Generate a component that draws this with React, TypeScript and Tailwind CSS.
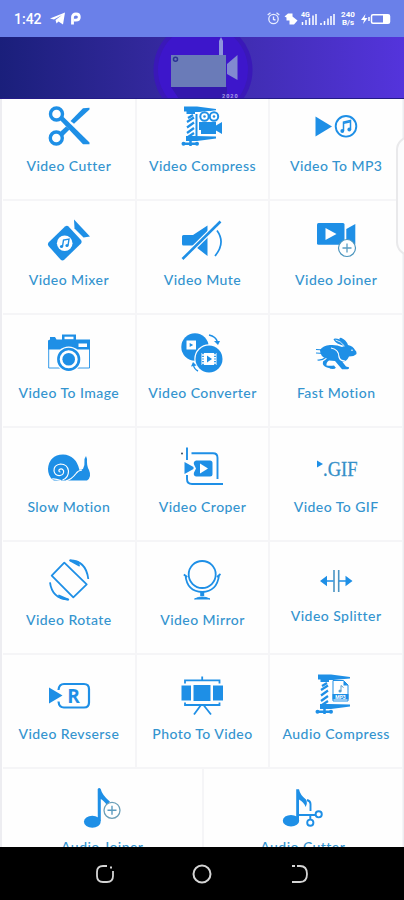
import { ReactNode } from "react"
import clsx from "clsx"

const BLUE = "#1e8fe6"

const clamp = (
  <>
    <path d="M3 1.500h13l19 2.500v1.600L18 7H14v2H5.500V6.500H3z" fill={BLUE} />
    <path d="M6 17l7-4.500M6 22.500l7-5M6 28l7-5M7 32l6-4M7 13l5-3" stroke={BLUE} strokeWidth="2.200" fill="none" />
    <path d="M5 31h9l21 .5v2L16 36H5z" fill={BLUE} />
    <path d="M9.500 35v6M2 38.800h15" stroke={BLUE} strokeWidth="2.500" fill="none" />
    <circle cx="2.500" cy="38.800" r="2" fill={BLUE} />
    <circle cx="16" cy="38.800" r="2" fill={BLUE} />
  </>
)

const icons: Record<string, ReactNode> = {
  cutter: (
    <>
      <g fill="none" stroke={BLUE} strokeWidth="3.400">
        <circle cx="8.500" cy="9" r="6" />
        <circle cx="8.300" cy="33" r="6" />
      </g>
      <path d="M14.500 11L41.500 37.500V39.200H35L12 15z" fill={BLUE} />
      <path d="M22.500 16L35 3.200L41.500 2.800V4.500L26 18.800z" fill={BLUE} />
      <path d="M12 27L18 21.500L21.500 24.500L15 31z" fill={BLUE} />
    </>
  ),
  compress: (
    <>
      {clamp}
      <path d="M14 7.500L35 5.500V31H14z" fill="#fff" />
      <g fill="none" stroke={BLUE} strokeWidth="2">
        <circle cx="23.500" cy="11.500" r="4.200" />
        <circle cx="33" cy="11.500" r="4.200" />
        <path d="M15.500 9v22" />
      </g>
      <circle cx="23.500" cy="11.500" r="1.300" fill={BLUE} />
      <circle cx="33" cy="11.500" r="1.300" fill={BLUE} />
      <path d="M18 17h17v3.500l6-3.500v12l-6-3.500V29H20v-4h-2z" fill={BLUE} />
    </>
  ),
  mp3: (
    <>
      <path d="M.5 11.500L17 21.500L.5 31.500z" fill={BLUE} />
      <circle cx="31" cy="21.300" r="10.300" fill="none" stroke={BLUE} strokeWidth="1.900" />
      <path d="M28.500 26v-9l7-1.500v9" fill="none" stroke={BLUE} strokeWidth="1.500" />
      <path d="M28.500 18.300l7-1.500" stroke={BLUE} strokeWidth="1.500" />
      <circle cx="27.300" cy="26" r="1.900" fill={BLUE} />
      <circle cx="34.300" cy="24.500" r="1.900" fill={BLUE} />
    </>
  ),
  mixer: (
    <>
      <path d="M17 7.500q2-1.500 3.500 0L33 21q1.300 1.800 0 3.500L16 41q-1.800 1-3.500-.5L.5 27q-1.200-1.700 0-3.500z" fill={BLUE} />
      <circle cx="16.700" cy="24.300" r="7.800" fill="#fff" />
      <path d="M26 .5L42 17.500L35.500 18.500L26.500 9.500z" fill={BLUE} />
      <path d="M14.500 27.500l1-6.500 5.500-1-1 6.500" fill="none" stroke={BLUE} strokeWidth="1.400" />
      <circle cx="13.500" cy="27.500" r="1.600" fill={BLUE} />
      <circle cx="19" cy="26.500" r="1.600" fill={BLUE} />
    </>
  ),
  mute: (
    <>
      <path d="M2.500 16H12L26.500 6.500V37L13 26.500H2.500q-1.500 0-1.500-1.500v-7.500q0-1.500 1.500-1.500z" fill={BLUE} />
      <path d="M1.500 40L39.500 2.500" stroke="#fff" strokeWidth="5" />
      <path d="M1.500 40L39.500 2.500" stroke={BLUE} strokeWidth="2.600" />
      <path d="M36 11.500q9 12.500-2 25.500" fill="none" stroke={BLUE} strokeWidth="1.700" />
    </>
  ),
  joiner: (
    <>
      <rect x="2" y="4" width="27.500" height="21.700" rx="1.500" fill={BLUE} />
      <path d="M31.300 10L40.300 5V25H31.300z" fill={BLUE} />
      <path d="M10.500 9L21.500 15L10.500 21z" fill="#fff" />
      <circle cx="32" cy="29" r="8.500" fill="#fff" stroke="#4a94bd" strokeWidth="1.200" />
      <path d="M27.500 29h9M32 24.500v9" stroke="#5a9dc2" strokeWidth="1.300" />
    </>
  ),
  image: (
    <>
      <path d="M.7 12V36H41.500V12" fill="none" stroke={BLUE} strokeWidth=".9" />
      <path d="M0 8.500L2 7.500V5h5l1.500 2.500H14V2.500H28V7.500H42V17.500H0z" fill={BLUE} />
      <path d="M16.500 4.700h9v2.500h-9z" fill="#fff" />
      <path d="M30.500 11.500h8.500v3.500h-8.500z" fill="#fff" />
      <circle cx="20.700" cy="27.300" r="12.800" fill="#fff" />
      <circle cx="20.700" cy="27.300" r="10.300" fill="#fff" stroke={BLUE} strokeWidth="2.600" />
      <circle cx="20.700" cy="27.300" r="6.300" fill={BLUE} />
    </>
  ),
  converter: (
    <>
      <circle cx="14" cy="15" r="13.700" fill={BLUE} />
      <path d="M5.500 8.500h9.500v9H5.500z" fill="#fff" />
      <path d="M8.700 11l3.500 2-3.500 2z" fill={BLUE} />
      <circle cx="28" cy="27" r="14.700" fill="#fff" />
      <circle cx="28" cy="27" r="13.500" fill={BLUE} />
      <path d="M20.500 21h15v12h-15z" fill="#fff" />
      <path d="M22 21v12M34 21v12" stroke={BLUE} strokeWidth="1.700" strokeDasharray="1.200 1.500" />
      <path d="M26 23.500l5 3.500-5 3.500z" fill={BLUE} />
      <path d="M28 3q7 1.500 8.500 7" fill="none" stroke={BLUE} strokeWidth="1.400" />
      <path d="M33 9h6l-2 4z" fill={BLUE} />
      <path d="M17 39q-4-2-4.500-6" fill="none" stroke={BLUE} strokeWidth="1.400" />
      <path d="M10 34.500l2-4.500 3.500 3.500z" fill={BLUE} />
    </>
  ),
  fast: (
    <>
      <path d="M5 18Q8 13.500 15 13Q22 12.500 27 15L29.500 14Q21 12 18.500 7.500Q19 5.500 25 7.500Q23.500 5.500 26 5.700Q31 7.500 33 13Q38 14 40 18Q42 19.500 41.500 22Q39 24.500 34 24.500Q32 29 27.500 30L31 34.500L34 35.300Q34.500 37.300 32.500 37.300H27L20 29L14 28.500Q11 30.500 11.500 33.500Q15 34 19 33.500L21 36Q17 37 12 35.500Q7 34 8 29.500L12 26.500Q5 25 5 18z" fill={BLUE} />
      <path d="M1 17.500l9 .5M1 21l8 .5M2.500 28q5 .5 8-2.500M15 36q3 .8 5 0" stroke={BLUE} strokeWidth="1.200" fill="none" />
      <path d="M16 16q8 1.500 8 9 1 4 6 4" stroke="#fff" strokeWidth="1.200" fill="none" />
      <path d="M20.500 8q5 1 9 6" stroke="#fff" strokeWidth=".8" fill="none" />
      <circle cx="37" cy="18.300" r=".8" fill="#fff" />
    </>
  ),
  slow: (
    <>
      <path d="M5 34Q0 30 0 23Q1 9 15 8.500Q28 9 31.500 24L35 23Q37 19 36.500 13L38 10L39 13Q38.500 20 41 24Q44 31 39 34.500H6z" fill={BLUE} />
      <path d="M4 33q3-.5 9 1.500M14.500 34q6-2 6-9-1-7-8-7-7 1-6.500 7 1 5 6 4.500 4.500-1 3.500-5-2-3-4.500-.5-.5 2 1.500 2M18 35q6-2 10-7.500 2-3 6-3.500" stroke="#fff" strokeWidth="1.200" fill="none" />
    </>
  ),
  croper: (
    <>
      <g fill="none" stroke={BLUE} strokeWidth="1.900">
        <path d="M6 1.500V14M6 29v4q0 5 5 5H42M10.500 7.300H32q4.500 0 4.500 4.500V33" />
      </g>
      <circle cx="1" cy="7.500" r="1" fill="#3b4b5c" />
      <path d="M3.500 16L12.500 21L12.500 23L3.500 28z" fill={BLUE} />
      <path d="M15 14.500H29q2.500 0 2.500 2.500V28q0 2.500-2.500 2.500H15q-3-1-2-4l2-4-2-4q-1-3 2-4z" fill={BLUE} />
      <path d="M19 17.500L27 22.500L19 27.500z" fill="#fff" />
    </>
  ),
  gif: (
    <>
      <path d="M2 14.500L8 18L2 21.500z" fill={BLUE} />
      <text x="8" y="29.500" fontFamily="Liberation Serif, serif" fontSize="22" fill="#348fc8" stroke="#348fc8" strokeWidth=".3" textLength="34.500" lengthAdjust="spacingAndGlyphs">
        .GIF
      </text>
    </>
  ),
  rotate: (
    <g fill="none" stroke={BLUE} strokeWidth="1.800" strokeLinejoin="round">
      <path d="M16.300 3.700L38.700 25.300L25.300 38.300L3.700 16.700z" />
      <path d="M22 1.500Q38 1.500 40.300 20M2 23.300Q4 39.500 20.300 40.500" />
      <path d="M22 1.500L31 6.500L30 3zM20.300 40.500L11 36.500L13 39z" fill={BLUE} />
    </g>
  ),
  mirror: (
    <g fill="none" stroke={BLUE} strokeWidth="1.800">
      <circle cx="21.200" cy="15.500" r="13.500" />
      <path d="M4.500 16.500Q6 32.500 21.200 33Q36 32.500 38 16.500M2.800 15.500l3.500 2.500M39.500 15l-3.500 3" />
      <path d="M21.200 33v4" strokeWidth="4" />
      <path d="M13.500 40Q21 36 29 40z" fill={BLUE} strokeWidth="1" />
    </g>
  ),
  splitter: (
    <>
      <path d="M19 11V33M23.700 11V33" stroke="#4a94c4" strokeWidth="1.600" />
      <path d="M10 22H18.500M24 22H32" stroke={BLUE} strokeWidth="1.300" />
      <path d="M5 22L12 16.800V27.200zM37.500 22L30.500 16.800V27.200z" fill={BLUE} />
    </>
  ),
  reverse: (
    <>
      <path d="M1 14.500L14.500 22.500L1 30.500z" fill={BLUE} />
      <path d="M10.500 17Q11 11 16 11H36Q41 11 41 16V29.500Q41 34.500 36 34.500H16Q11 34.500 10.500 28.500" fill="none" stroke={BLUE} strokeWidth="2.200" />
      <text x="25.500" y="29.500" textAnchor="middle" fontFamily="Open Sans, sans-serif" fontWeight="700" fontSize="19" fill={BLUE}>
        R
      </text>
    </>
  ),
  photo: (
    <>
      <path d="M.5 12.500h9.500v15H.5zM12.500 12h17v16h-17zM32 12.500h10v15h-10z" fill={BLUE} />
      <path d="M4 10.500V7.300H38.500V10.500M4 29.500V32H38.500V29.500M21.200 7V3.500M20 32L13 41.500M22.500 32L30 41.500" fill="none" stroke={BLUE} strokeWidth="1.800" />
    </>
  ),
  audioCompress: (
    <>
      {clamp}
      <path d="M18 7.500H28.500L33 12V28H18z" fill="#fff" stroke={BLUE} strokeWidth="1" />
      <path d="M28.500 7.500V12.500H33z" fill={BLUE} />
      <path d="M26 18.500V12.500l2.500 2" stroke="#5c9fcb" strokeWidth="1" fill="none" />
      <circle cx="25" cy="18" r="1.500" fill="#5c9fcb" />
      <path d="M17.500 21h16v5.500h-16z" fill={BLUE} />
      <text x="25.500" y="25.500" textAnchor="middle" fontFamily="Roboto, sans-serif" fontWeight="700" fontSize="5" fill="#fff">
        MP3
      </text>
    </>
  ),
  audioJoiner: (
    <>
      <path d="M16.700 3q1.500-2 3 0Q21 9 29 15.700L26 19Q22 14 19.800 13V35h-3z" fill={BLUE} />
      <ellipse cx="11.300" cy="35.700" rx="8.400" ry="6" fill={BLUE} />
      <circle cx="31" cy="24.300" r="8" fill="#fff" stroke="#6b9fb8" strokeWidth="1.300" />
      <path d="M26.500 24.300h9M31 19.800v9" stroke="#5c9cc0" strokeWidth="1.400" />
    </>
  ),
  audioCutter: (
    <>
      <path d="M14.200 3.300h2.800Q18 9 24 13.500Q26 17 23.500 21Q22 16 17 13.500V34h-2.800z" fill={BLUE} />
      <ellipse cx="9" cy="34.700" rx="8.200" ry="5.800" fill={BLUE} />
      <g fill="none" stroke={BLUE} strokeWidth="1.900">
        <path d="M16 29H33.500M28.300 29v4.500M25 14q3.500 1 3.500 4v7" />
        <circle cx="36.700" cy="28.300" r="3.100" />
        <circle cx="28.300" cy="36.700" r="3.100" />
      </g>
    </>
  ),
}

interface Tool {
  icon: string
  title: string
  tight?: boolean
}

const tools: Tool[] = [
  { icon: "cutter", title: "Video Cutter" },
  { icon: "compress", title: "Video Compress" },
  { icon: "mp3", title: "Video To MP3" },
  { icon: "mixer", title: "Video Mixer" },
  { icon: "mute", title: "Video Mute" },
  { icon: "joiner", title: "Video Joiner" },
  { icon: "image", title: "Video To Image" },
  { icon: "converter", title: "Video Converter" },
  { icon: "fast", title: "Fast Motion" },
  { icon: "slow", title: "Slow Motion" },
  { icon: "croper", title: "Video Croper" },
  { icon: "gif", title: "Video To GIF" },
  { icon: "rotate", title: "Video Rotate" },
  { icon: "mirror", title: "Video Mirror" },
  { icon: "splitter", title: "Video Splitter", tight: true },
  { icon: "reverse", title: "Video Revserse" },
  { icon: "photo", title: "Photo To Video" },
  { icon: "audioCompress", title: "Audio Compress" },
]

const audioTools: Tool[] = [
  { icon: "audioJoiner", title: "Audio Joiner" },
  { icon: "audioCutter", title: "Audio Cutter" },
]

function ToolCell({ tool }: { tool: Tool }) {
  return (
    <div className="flex h-[113.5px] flex-col items-center border-r-2 border-b-2 border-[#f5f5f7] pt-[17.5px]">
      <svg viewBox="0 0 42 42" className="h-[42px] w-[42px] shrink-0 overflow-visible">
        {icons[tool.icon]}
      </svg>
      <span
        className={clsx(
          "font-[Lato,sans-serif] text-[14px] leading-5 font-medium tracking-[0.45px] whitespace-nowrap text-[#3494cf]",
          tool.tight ? "mt-[5px]" : "mt-[9px]",
        )}
      >
        {tool.title}
      </span>
    </div>
  )
}

function StatusBar() {
  return (
    <div className="flex h-[37px] shrink-0 items-center bg-[#6a80e9] pr-[13px] pl-[14px] text-white">
      <span className="w-[36px] font-[Roboto,sans-serif] text-[14px] leading-none font-medium">1:42</span>
      {/* Telegram */}
      <svg viewBox="0 0 15 13" className="h-[13px] w-[15px]">
        <path d="M0 6.500L15 .5L13 12.500L8.500 9.500L6.500 11.500L5.500 8L12 3L4 7.500z" fill="#fff" />
      </svg>
      <svg viewBox="0 0 12 13" className="ml-[5px] h-[13px] w-[12px]">
        <path
          d="M2.500 12.500V5Q2.500 2 6 2Q9.300 2 9.300 5Q9.300 8.200 6 8.200H4"
          fill="none"
          stroke="#fff"
          strokeWidth="2.800"
        />
      </svg>
      <div className="ml-auto flex items-center">
        {/* Alarm */}
        <svg viewBox="0 0 13 13" className="h-[13px] w-[13px]" fill="none" stroke="#e8edff" strokeWidth="1.300">
          <circle cx="6.500" cy="7" r="4.700" />
          <path d="M6.500 4.500V7.500L8.500 8M.7 3L3.500 .8M12.300 3L9.500 .8" />
        </svg>
        {/* Vibrate */}
        <svg viewBox="0 0 14 12" className="ml-[4px] h-[12px] w-[14px]">
          <path d="M.5 3.500L4 .5H8.500V3.500L13.500 7.500L10 11.500H5.500V7.500H2.500V4.500z" fill="#fff" />
        </svg>
        <svg viewBox="0 0 34 15" className="ml-[3px] h-[15px] w-[34px]">
          <text x="0" y="6" fontFamily="Roboto, sans-serif" fontWeight="700" fontSize="7" fill="#fff">
            4G
          </text>
          <path
            d="M1.500 14v-3M5 14V9M8.500 14V7M12 14V4.500M15 14V3M20 14v-2M23.500 14v-4M27 14V7.500M30 14V5M33 14V3"
            stroke="#fff"
            strokeWidth="1.500"
          />
        </svg>
        <div className="ml-[5px] w-[16px] text-center font-[Roboto,sans-serif] text-[8px] leading-[8px] font-bold">
          240
          <br />
          B/s
        </div>
        <svg viewBox="0 0 30 12" className="ml-[5px] h-[12px] w-[30px]">
          <path d="M4.500 1L0 7h3l-1 4 4.500-6H3.500z" fill="#fff" />
          <path d="M8 4v4" stroke="#fff" strokeWidth="1.500" />
          <rect x="10.500" y="1.700" width="18" height="8.600" rx="1.500" fill="none" stroke="#fff" strokeWidth="1.500" />
          <path d="M22 2h6v8h-6z" fill="#fff" />
        </svg>
      </div>
    </div>
  )
}

function Banner() {
  return (
    <div className="flex h-[62px] shrink-0 justify-center overflow-hidden border-b border-[#241b86] bg-gradient-to-r from-[#1a1f7b] via-[#3b2ba8] to-[#5434dc]">
      <svg viewBox="0 0 102 62" className="ml-[4px] h-[62px] w-[102px]">
        <circle cx="50" cy="33" r="49.500" fill="#3a18b8" />
        <circle cx="50" cy="33" r="45" fill="#3d16cb" />
        <path d="M18 50H74V62H26z" fill="#3318ad" />
        <rect x="18" y="18" width="55" height="32" fill="#6a7bb8" />
        <circle cx="22.500" cy="22.300" r="2" fill="none" stroke="#2b3294" strokeWidth="1.500" />
        <path d="M66 18V4l2-4 2 4V18z" fill="#8e95dc" />
        <path d="M74 27L84.500 18V43L74 37z" fill="#8189d0" />
        <text x="69" y="61" fontFamily="Roboto, sans-serif" fontWeight="700" fontSize="5.500" letterSpacing="1" fill="#a9a0e6">
          2020
        </text>
      </svg>
    </div>
  )
}

function NavBar() {
  return (
    <div className="flex h-[53px] shrink-0 items-center justify-center gap-[77.5px] bg-black">
      <svg viewBox="0 0 20 20" className="h-5 w-5" fill="none" stroke="#d4d4d4" strokeWidth="1.800">
        <path d="M12 2H8Q2 2 2 8V12Q2 18 8 18H12Q18 18 18 12V7" />
        <path d="M15 3.500h2" strokeWidth="2.200" />
      </svg>
      <svg viewBox="0 0 20 20" className="h-5 w-5" fill="none" stroke="#d4d4d4" strokeWidth="2">
        <circle cx="10" cy="10" r="8.500" />
      </svg>
      <svg viewBox="0 0 20 20" className="h-5 w-5" fill="none" stroke="#d4d4d4" strokeWidth="1.800">
        <path d="M2 2h3M7 2H10Q17 2 17 10Q17 18 10 18H2" />
      </svg>
    </div>
  )
}

export default function App() {
  return (
    <div className="relative flex h-[900px] w-[404px] flex-col overflow-hidden bg-[#fefefe]">
      <StatusBar />
      <Banner />

      {/* Tool grid, scrolled slightly under the banner */}
      <div className="min-h-0 flex-1 overflow-hidden border-r border-l-2 border-[#ededf1]">
        <div className="-mt-[11.5px] -mr-px ml-px grid grid-cols-3">
          {tools.map((tool) => (
            <ToolCell key={tool.title} tool={tool} />
          ))}
        </div>
        <div className="-mr-px ml-px grid grid-cols-2">
          {audioTools.map((tool) => (
            <ToolCell key={tool.title} tool={tool} />
          ))}
        </div>
      </div>

      <NavBar />

      {/* Edge panel handle */}
      <div className="absolute top-[136px] left-[396px] h-[120px] w-8 rounded-[14px] border-2 border-[#e9e9eb] bg-[#fcfcfd]" />
    </div>
  )
}
